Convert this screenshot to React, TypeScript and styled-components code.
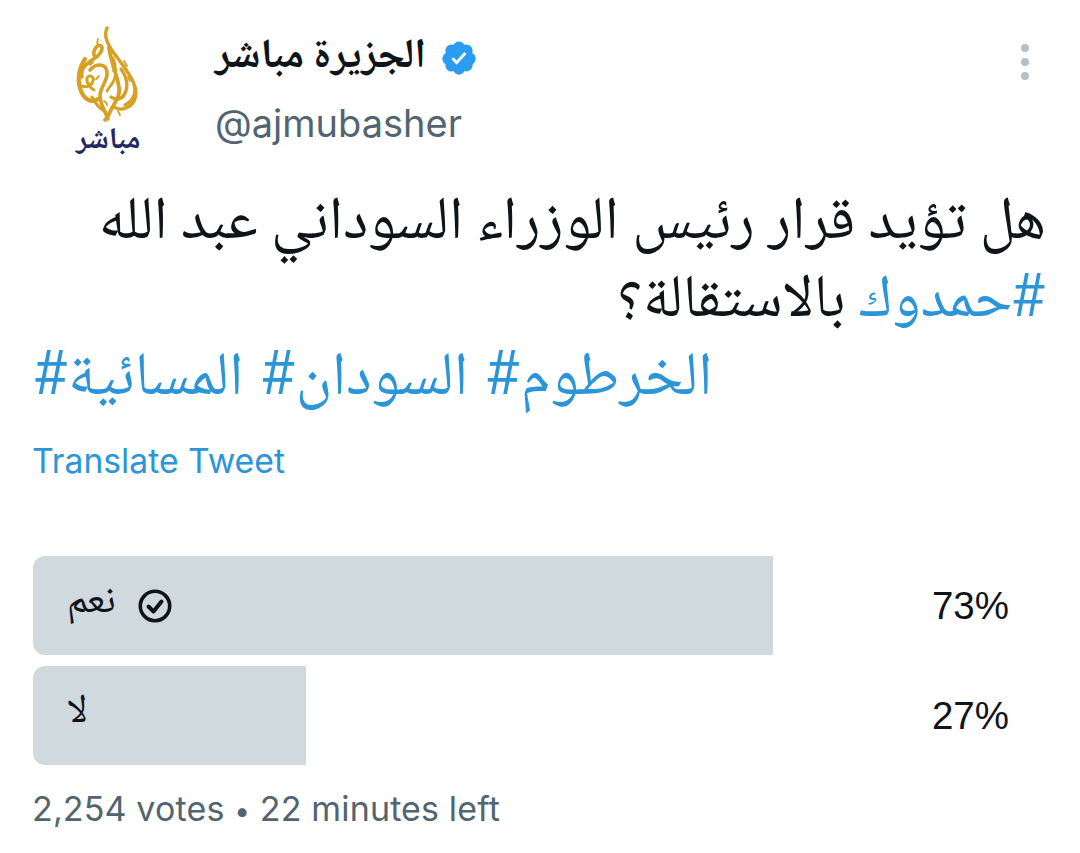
import React from "react";
import styled, { createGlobalStyle } from "styled-components";

const Global = createGlobalStyle`
  html, body { margin: 0; padding: 0; background: #fff; }
  body { font-family: Inter, "Noto Sans", "DejaVu Sans", sans-serif; color: #0f1419; }
`;

const arabic = `"Noto Naskh Arabic", "Noto Sans Arabic", "DejaVu Sans", sans-serif`;

const Page = styled.main`
  width: 1080px;
  height: 853px;
  box-sizing: border-box;
  padding: 25px 34px 0 33px;
  overflow: hidden;
`;
const Header = styled.header`
  display: flex;
  align-items: flex-start;
  height: 161px;
`;
const Logo = styled.div`
  width: 182px;
  padding-left: 43px;
  box-sizing: border-box;
  display: flex;
  flex-direction: column;
  align-items: flex-start;
`;
const LogoText = styled.div`
  font-family: ${arabic};
  font-size: 30px;
  line-height: 30px;
  font-weight: 700;
  color: #25285f;
  direction: rtl;
  margin-top: 4px;
`;
const Identity = styled.div`
  flex: 1;
  padding-top: 6px;
`;
const NameRow = styled.div`
  display: flex;
  align-items: center;
  gap: 14px;
  height: 54px;
`;
const Name = styled.span`
  font-family: ${arabic};
  font-weight: 700;
  font-size: 41.5px;
  line-height: 54px;
  direction: rtl;
`;
const Handle = styled.div`
  font-size: 38px;
  line-height: 44px;
  color: #536471;
  margin-top: 16px;
`;
const More = styled.div`
  display: flex;
  flex-direction: column;
  gap: 6px;
  margin-top: 19px;
  margin-right: 17px;
`;
const Dot = styled.span`
  width: 8px;
  height: 8px;
  border-radius: 50%;
  background: #b4c0c7;
`;
const TweetText = styled.div`
  font-family: ${arabic};
  font-size: 60.2px;
  line-height: 75px;
  height: 231px;
  padding-top: 2px;
  margin-bottom: -2px;
`;
const TextLine = styled.div<{ $shift?: number }>`
  direction: rtl;
  white-space: nowrap;
  height: 75px;
  margin-top: ${(p) => p.$shift ?? 0}px;
`;
const TagsLine = styled.div`
  display: flex;
  gap: 18px;
  height: 75px;
  white-space: nowrap;
  margin-top: 3px;
  padding-left: 1px;
  font-size: 61.2px;
`;
const Tag = styled.span`
  display: inline-block;
  color: #2b95d8;
`;
const Translate = styled.div`
  font-size: 33.7px;
  line-height: 40px;
  color: #2b95d8;
  margin-top: 24px;
  margin-left: -1px;
`;
const Poll = styled.section`
  display: flex;
  flex-direction: column;
  gap: 11px;
  margin-top: 75px;
`;
const Row = styled.div`
  display: flex;
  align-items: center;
  justify-content: space-between;
  height: 99px;
  padding-right: 37px;
`;
const Bar = styled.div`
  height: 99px;
  background: #cfd9de;
  border-radius: 12px 0 0 12px;
  display: flex;
  align-items: center;
  box-sizing: border-box;
  padding-left: 34px;
  gap: 22px;
  direction: rtl;
  justify-content: flex-end;
`;
const Option = styled.span`
  font-family: ${arabic};
  font-size: 40px;
  line-height: 40px;
  margin-top: -6px;
`;
const Percent = styled.span`
  font-family: "Liberation Sans", Arial, sans-serif;
  font-size: 38.5px;
  line-height: 40px;
`;
const Footer = styled.div`
  font-size: 34px;
  line-height: 40px;
  color: #536471;
  margin-top: 24px;
  margin-left: -1px;
  letter-spacing: 0.15px;
`;
const Bullet = styled.span`
  font-size: 28px;
`;

const gold = "#d8a023";

const Emblem = () => (
  <svg width="62" height="98" viewBox="0 0 62 98" fill="none" stroke={gold} strokeLinecap="round" strokeLinejoin="round">
    <path d="M31 3c-3 6-1 13 4 21 8 12 18 22 23 35 3 9-1 17-9 21" strokeWidth="3.4" />
    <path d="M33 23c2 14 8 27 10 39 2 10-6 17-9 25-1 3-3 6-5 8" strokeWidth="3.8" />
    <path d="M18 30c-1-6 4-11 7-9 3 2-1 9-6 12C10 39 4 44 6 52" strokeWidth="3.6" />
    <path d="M9 34C1 46 1 60 7 70c5 7 11 7 15 4" strokeWidth="4.2" />
    <path d="M14 45c6-7 16-7 17 2 1 9-7 15-7 24 0 8 5 15 8 23" strokeWidth="3.6" />
    <path d="M3 60c6 3 12 2 14-4 2-4-4-7-6-3-1 4 3 10 7 12" strokeWidth="3" />
    <path d="M45 44c6 8 8 18 3 26-3 5-9 5-13 2" strokeWidth="3.4" />
    <path d="M59 62c3 9-1 18-9 21-5 2-9 1-12-1" strokeWidth="3.2" />
    <path d="M37 33c3 8 4 15 1 22-2 5-5 7-7 11" strokeWidth="2.8" />
    <path d="M16 72c3 6 8 12 14 15" strokeWidth="3" />
    <path d="M22 14c-1 3-1 5 0 7M36 40c2 2 2 4 1 6M48 36l3 5M14 40l3-3M28 76c2 1 3 2 3 4M42 86l2 4M52 52l2 4M20 54l3-3" strokeWidth="1.8" />
  </svg>
);

const Verified = () => (
  <svg width="38" height="38" viewBox="0 0 24 24" aria-label="Verified">
    <path fill="#2a9df0" d="M22.5 12.5c0-1.58-.875-2.95-2.148-3.6.154-.435.238-.905.238-1.4 0-2.21-1.71-3.998-3.818-3.998-.47 0-.92.084-1.336.25C14.818 2.415 13.51 1.5 12 1.5s-2.816.917-3.437 2.25c-.415-.165-.866-.25-1.336-.25-2.11 0-3.818 1.79-3.818 4 0 .494.083.964.237 1.4-1.272.65-2.147 2.018-2.147 3.6 0 1.495.782 2.798 1.942 3.486-.02.17-.032.34-.032.514 0 2.21 1.708 4 3.818 4 .47 0 .92-.086 1.335-.25.62 1.334 1.926 2.25 3.437 2.25 1.512 0 2.818-.916 3.437-2.25.415.163.865.248 1.336.248 2.11 0 3.818-1.79 3.818-4 0-.174-.012-.344-.033-.513 1.158-.687 1.943-1.99 1.943-3.484z" />
    <path fill="#fff" d="M10.54 16.2 7.2 12.86l1.3-1.3 1.96 1.96 4.9-5.35 1.35 1.24z" />
  </svg>
);

const CheckCircle = () => (
  <svg width="34" height="34" viewBox="0 0 34 34" fill="none" stroke="#0f1419" strokeLinecap="round" strokeLinejoin="round">
    <circle cx="17" cy="17" r="14.7" strokeWidth="3.6" />
    <path d="M10.5 17.5l5 5 8-10" strokeWidth="4" />
  </svg>
);

export default function App() {
  return (
    <Page>
      <Global />
      <Header>
        <Logo>
          <Emblem />
          <LogoText>مباشر</LogoText>
        </Logo>
        <Identity>
          <NameRow>
            <Name>الجزيرة مباشر</Name>
            <Verified />
          </NameRow>
          <Handle>@ajmubasher</Handle>
        </Identity>
        <More>
          <Dot />
          <Dot />
          <Dot />
        </More>
      </Header>
      <TweetText>
        <TextLine>هل تؤيد قرار رئيس الوزراء السوداني عبد الله</TextLine>
        <TextLine $shift={3}>
          <Tag>#حمدوك</Tag> بالاستقالة؟
        </TextLine>
        <TagsLine>
          <Tag>#المسائية</Tag>
          <Tag>#السودان</Tag>
          <Tag>#الخرطوم</Tag>
        </TagsLine>
      </TweetText>
      <Translate>Translate Tweet</Translate>
      <Poll>
        <Row>
          <Bar style={{ width: 740 }}>
            <CheckCircle />
            <Option>نعم</Option>
          </Bar>
          <Percent>73%</Percent>
        </Row>
        <Row>
          <Bar style={{ width: 273 }}>
            <Option>لا</Option>
          </Bar>
          <Percent>27%</Percent>
        </Row>
      </Poll>
      <Footer>2,254 votes <Bullet>•</Bullet> 22 minutes left</Footer>
    </Page>
  );
}
